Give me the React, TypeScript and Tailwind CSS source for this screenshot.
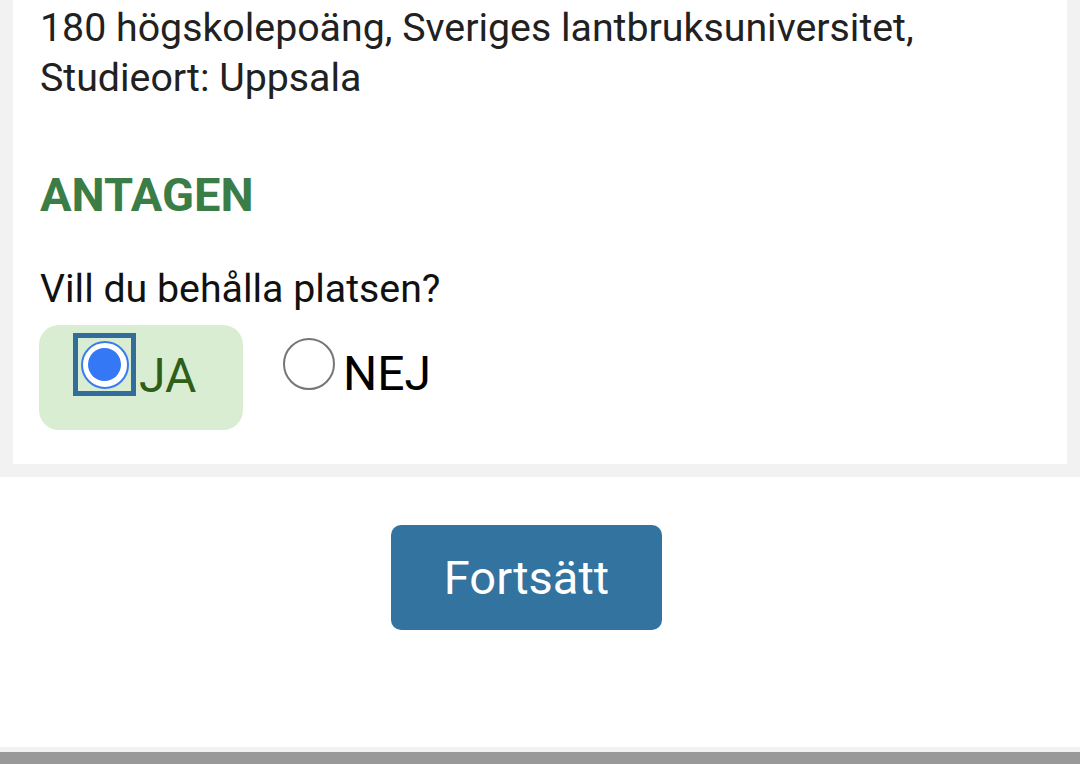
import React from "react";

export default function App() {
  return (
    <div className="w-[1080px] h-[764px] bg-[#f2f2f2] flex flex-col overflow-hidden" style={{ fontFamily: "Roboto, 'Noto Sans', sans-serif" }}>
      <div className="px-[13px]">
        <div className="bg-white h-[464px] pl-[27px] pt-[3px]">
          <p className="text-[39.3px] leading-[50px] text-[#212121]">
            180 högskolepoäng, Sveriges lantbruksuniversitet,<br />Studieort: Uppsala
          </p>
          <h2 className="mt-[67px] text-[47px] leading-[50px] font-bold text-[#3a7d47]">ANTAGEN</h2>
          <p className="mt-[44px] text-[39.3px] leading-[50px] text-[#111]">Vill du behålla platsen?</p>
          <div className="mt-[11px] -ml-[1px] flex items-start">
            <label className="w-[204px] h-[105px] rounded-[20px] bg-[#d9edd2] flex items-start pl-[34px] pt-[8px]">
              <span className="w-[63px] h-[63px] border-[5px] border-[#336e9b] flex items-center justify-center">
                <span className="w-[48px] h-[48px] rounded-full border-[2px] border-[#3a7bf0] bg-white flex items-center justify-center">
                  <span className="w-[33px] h-[33px] rounded-full bg-[#3478f6]" />
                </span>
              </span>
              <span className="text-[48px] leading-[50px] text-[#2e5e17] mt-[18px] ml-[3px]">JA</span>
            </label>
            <label className="ml-[40px] flex items-start pt-[13px]">
              <span className="w-[52px] h-[52px] rounded-full border-[2.5px] border-[#767676] bg-white" />
              <span className="text-[48px] leading-[50px] text-black mt-[11px] ml-[8px]">NEJ</span>
            </label>
          </div>
        </div>
      </div>
      <div className="h-[13px]" />
      <div className="bg-white h-[270px] flex flex-col pt-[48px]">
        <button className="ml-[391px] w-[271px] h-[105px] rounded-[10px] bg-[#33739f] text-white text-[47px] leading-[50px]">Fortsätt</button>
      </div>
      <div className="h-[5px] bg-[#f2f2f2]" />
      <div className="flex-1 bg-[#999999]" />
    </div>
  );
}
